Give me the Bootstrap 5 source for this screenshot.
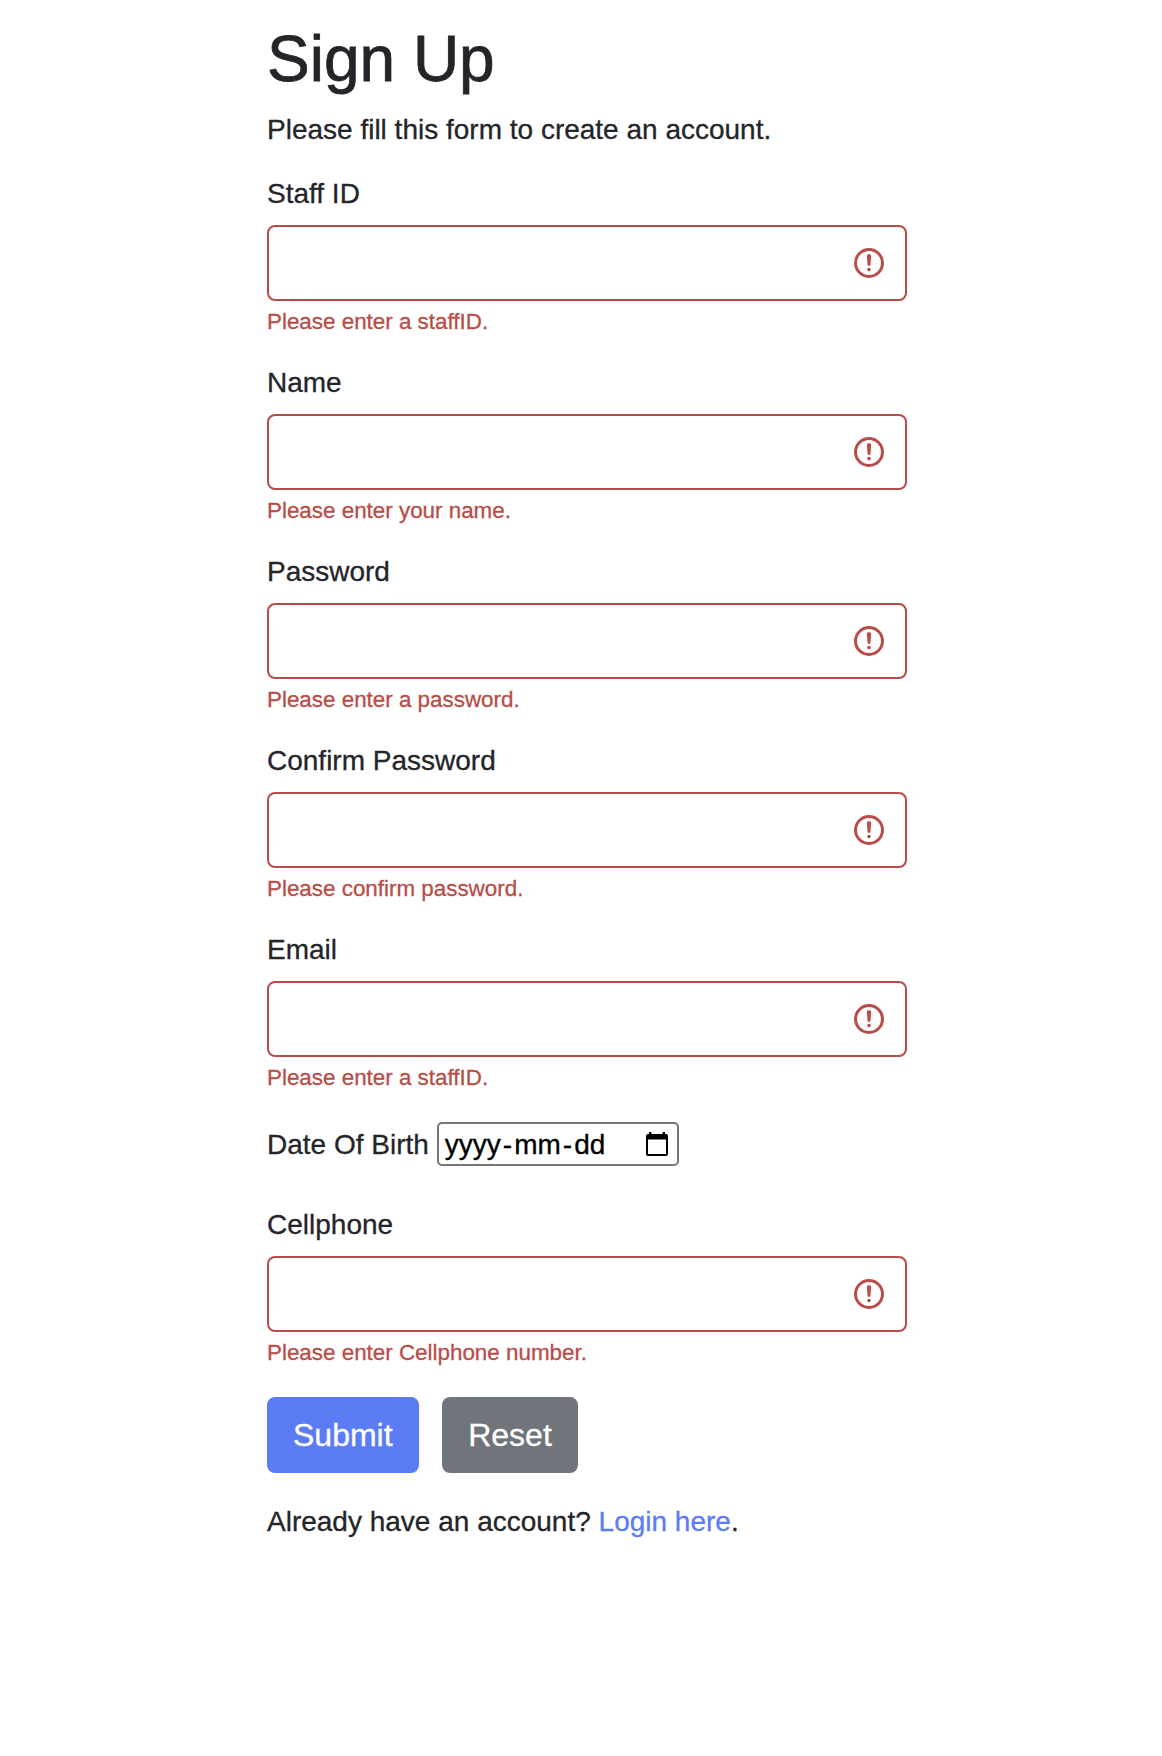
<!DOCTYPE html>
<html lang="en">
<head>
<meta charset="UTF-8">
<meta name="viewport" content="width=device-width, initial-scale=1">
<title>Sign Up</title>
<link href="https://cdn.jsdelivr.net/npm/bootstrap@5.3.0/dist/css/bootstrap.min.css" rel="stylesheet">
<style>
  :root { font-size: 32px; --bs-border-width: 2px; --bs-border-radius: 8px; }
  body { font: 28px/1.5 "Liberation Sans", Arial, sans-serif; color: #232529; background: #fff; -webkit-text-stroke: .3px; }
  .signup-wrap { width: 720px; padding: 21px 40px; margin-left: 227px; }
  .signup-wrap h2 { font-size: 64px; line-height: 1.2; margin-bottom: 11px; -webkit-text-stroke: .8px; }
  .intro-text { margin-bottom: 22.2px; }
  .field-group { margin-bottom: 23px; }
  .field-group .form-label { display: block; margin-bottom: 10px; font-size: 28px; }
  .field-group .form-control { height: 76px; border-width: 2px; border-radius: 8px; }
  .field-group .form-control.is-invalid {
    border-color: #b84d48;
    background-image: url("data:image/svg+xml,%3csvg xmlns='http://www.w3.org/2000/svg' viewBox='0 0 12 12' width='12' height='12' fill='none' stroke='%23b84d48'%3e%3ccircle cx='6' cy='6' r='4.5'/%3e%3cpath stroke-linejoin='round' d='M5.8 3.6h.4L6 6.5z'/%3e%3ccircle cx='6' cy='8.2' r='.6' fill='%23b84d48' stroke='none'/%3e%3c/svg%3e");
  }
  .field-group .invalid-feedback { font-size: 22.4px; line-height: 33.6px; margin-top: 4.4px; color: #b84d48; }
  .birth-row { margin: 27px 0 38px; }
  .birth-row > span, .date-box > span { padding-top: 2px; }
  .date-box { width: 242px; height: 44px; margin-left: 8px; padding: 0 9px 0 4px; border: 2px solid #767676; border-radius: 5px; color: #000; line-height: 40px; }
  .date-box span span { padding: 0 2px; }
  .birth-row > span { line-height: 40px; }
  .btn-row { margin-top: 27px; gap: 23px; }
  .btn-row .btn { font-size: 32px; border-width: 2px; border-radius: 8px; height: 76px; padding: 12px 24px; line-height: 48px; }
  .btn-row .btn-secondary { padding-left: 24.6px; }
  .btn-primary { --bs-btn-bg: #5c7cf5; --bs-btn-border-color: #5c7cf5; }
  .btn-secondary { --bs-btn-bg: #70757b; --bs-btn-border-color: #70757b; }
  .login-text { margin-top: 28.3px; }
  .login-text a { color: #5c7cf5; }
</style>
</head>
<body>
<main class="signup-wrap">
  <h2 class="fw-normal">Sign Up</h2>
  <p class="intro-text">Please fill this form to create an account.</p>
  <form novalidate>
    <div class="field-group">
      <label class="form-label" for="staff">Staff ID</label>
      <input class="form-control is-invalid" id="staff" type="text">
      <div class="invalid-feedback">Please enter a staffID.</div>
    </div>
    <div class="field-group">
      <label class="form-label" for="fullname">Name</label>
      <input class="form-control is-invalid" id="fullname" type="text">
      <div class="invalid-feedback">Please enter your name.</div>
    </div>
    <div class="field-group">
      <label class="form-label" for="pass">Password</label>
      <input class="form-control is-invalid" id="pass" type="password">
      <div class="invalid-feedback">Please enter a password.</div>
    </div>
    <div class="field-group">
      <label class="form-label" for="confirm">Confirm Password</label>
      <input class="form-control is-invalid" id="confirm" type="password">
      <div class="invalid-feedback">Please confirm password.</div>
    </div>
    <div class="field-group mb-0">
      <label class="form-label" for="email">Email</label>
      <input class="form-control is-invalid" id="email" type="email">
      <div class="invalid-feedback">Please enter a staffID.</div>
    </div>
    <div class="birth-row d-flex align-items-center">
      <span>Date Of Birth</span>
      <div class="date-box d-flex align-items-center justify-content-between" tabindex="0">
        <span><span>yyyy</span>-<span>mm</span>-<span>dd</span></span>
        <svg width="22" height="24" viewBox="0 0 22 24" aria-hidden="true"><path fill="#000" fill-rule="evenodd" d="M3 0h2.4v2h11.2V0H19v2h1q2 0 2 2v18q0 2-2 2H2q-2 0-2-2V4q0-2 2-2h1zM2 7.5V22h18V7.5z"/></svg>
      </div>
    </div>
    <div class="field-group mb-0">
      <label class="form-label" for="cell">Cellphone</label>
      <input class="form-control is-invalid" id="cell" type="text">
      <div class="invalid-feedback">Please enter Cellphone number.</div>
    </div>
    <div class="btn-row d-flex">
      <button type="button" class="btn btn-primary">Submit</button>
      <button type="reset" class="btn btn-secondary">Reset</button>
    </div>
    <p class="login-text mb-0">Already have an account? <a class="text-decoration-none" href="#">Login here</a>.</p>
  </form>
</main>
<script src="https://cdn.jsdelivr.net/npm/bootstrap@5.3.0/dist/js/bootstrap.bundle.min.js"></script>
</body>
</html>
